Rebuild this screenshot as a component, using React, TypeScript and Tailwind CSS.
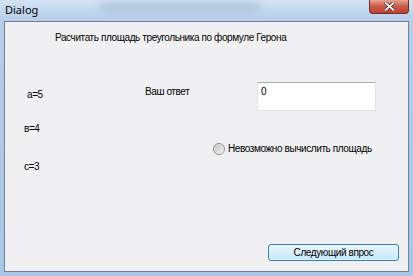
import React from "react";

const ui = { fontFamily: '"Liberation Sans", Arial, sans-serif' };

export default function App() {
  return (
    <div className="w-[413px] h-[276px] overflow-hidden bg-[#b9d1ea] flex flex-col relative" style={ui}>
      {/* title bar */}
      <div className="h-[21px] flex items-start relative bg-gradient-to-b from-[#d3e3f4] via-[#c3d8ee] to-[#b6cde8]">
        <div className="absolute left-[100px] top-[3px] w-[160px] h-[8px] rounded-full bg-[#9fb5cf] blur-[4px] opacity-70" />
        <span className="relative ml-[5px] mt-[3px] text-[11px] leading-[14px] text-black" style={{ fontFamily: '"Noto Sans", "Open Sans", sans-serif' }}>
          Dialog
        </span>
        <div className="absolute right-[4px] top-0 w-[40px] h-[14px] rounded-b-[4px] border border-t-0 border-[#6b2d2d] bg-gradient-to-b from-[#e8a393] via-[#c9584a] to-[#c23f2f] flex items-center justify-center">
          <svg width="11" height="9" viewBox="0 0 11 9">
            <path d="M1.5 1 L9.5 8 M9.5 1 L1.5 8" stroke="#4a1a1a" strokeWidth="3.2" strokeLinecap="square" />
            <path d="M1.5 1 L9.5 8 M9.5 1 L1.5 8" stroke="#ffffff" strokeWidth="1.8" strokeLinecap="square" />
          </svg>
        </div>
      </div>
      {/* body with frame */}
      <div className="flex-1 px-[4px] pb-[4px] bg-gradient-to-b from-[#b6cde8] to-[#a9c5e6]">
        <div className="w-[405px] h-[251px] border border-[#6f8299] bg-[#f0f0f2] flex flex-col text-[10px] tracking-[-0.4px] text-black">
          <p className="ml-[50px] mt-[10px] leading-[12px] whitespace-nowrap">Расчитать площадь треугольника по формуле Герона</p>
          <div className="flex mt-[38px]">
            <div className="w-[140px] flex flex-col">
              <span className="ml-[22px] mt-[7px] leading-[12px]">a=5</span>
              <span className="ml-[19px] mt-[22px] leading-[12px]">в=4</span>
              <span className="ml-[19px] mt-[26px] leading-[12px]">c=3</span>
            </div>
            <div className="w-[67px]">
              <span className="block mt-[4px] leading-[12px] whitespace-nowrap">Ваш ответ</span>
            </div>
            <div className="flex flex-col">
              <div className="ml-[45px] w-[119px] h-[29px] bg-white border border-[#e2e3ea] border-t-[#abadb3] px-[3px] pt-[3px] leading-[12px]">0</div>
              <div className="flex items-center mt-[32px] ml-[1px]">
                <span className="w-[12px] h-[12px] rounded-full border border-[#8e8f8f] bg-gradient-to-br from-[#d5d5d5] to-[#f4f4f4] flex items-center justify-center">
                  <span className="w-[8px] h-[8px] rounded-full bg-gradient-to-br from-[#c8c8c8] to-[#f0f0f0]" />
                </span>
                <span className="ml-[3px] leading-[12px] whitespace-nowrap">Невозможно вычислить площадь</span>
              </div>
            </div>
          </div>
          <div className="mt-auto mb-[10px] mr-[9px] flex justify-end">
            <button className="w-[131px] h-[17px] rounded-[3px] border border-[#3c7fb1] bg-gradient-to-b from-[#eaf6fd] via-[#d9f0fc] to-[#bee6fd] text-[10px] tracking-[-0.4px] leading-[14px] text-black shadow-[inset_0_0_0_1px_#dff2fd]">
              Следующий впрос
            </button>
          </div>
        </div>
      </div>
    </div>
  );
}
